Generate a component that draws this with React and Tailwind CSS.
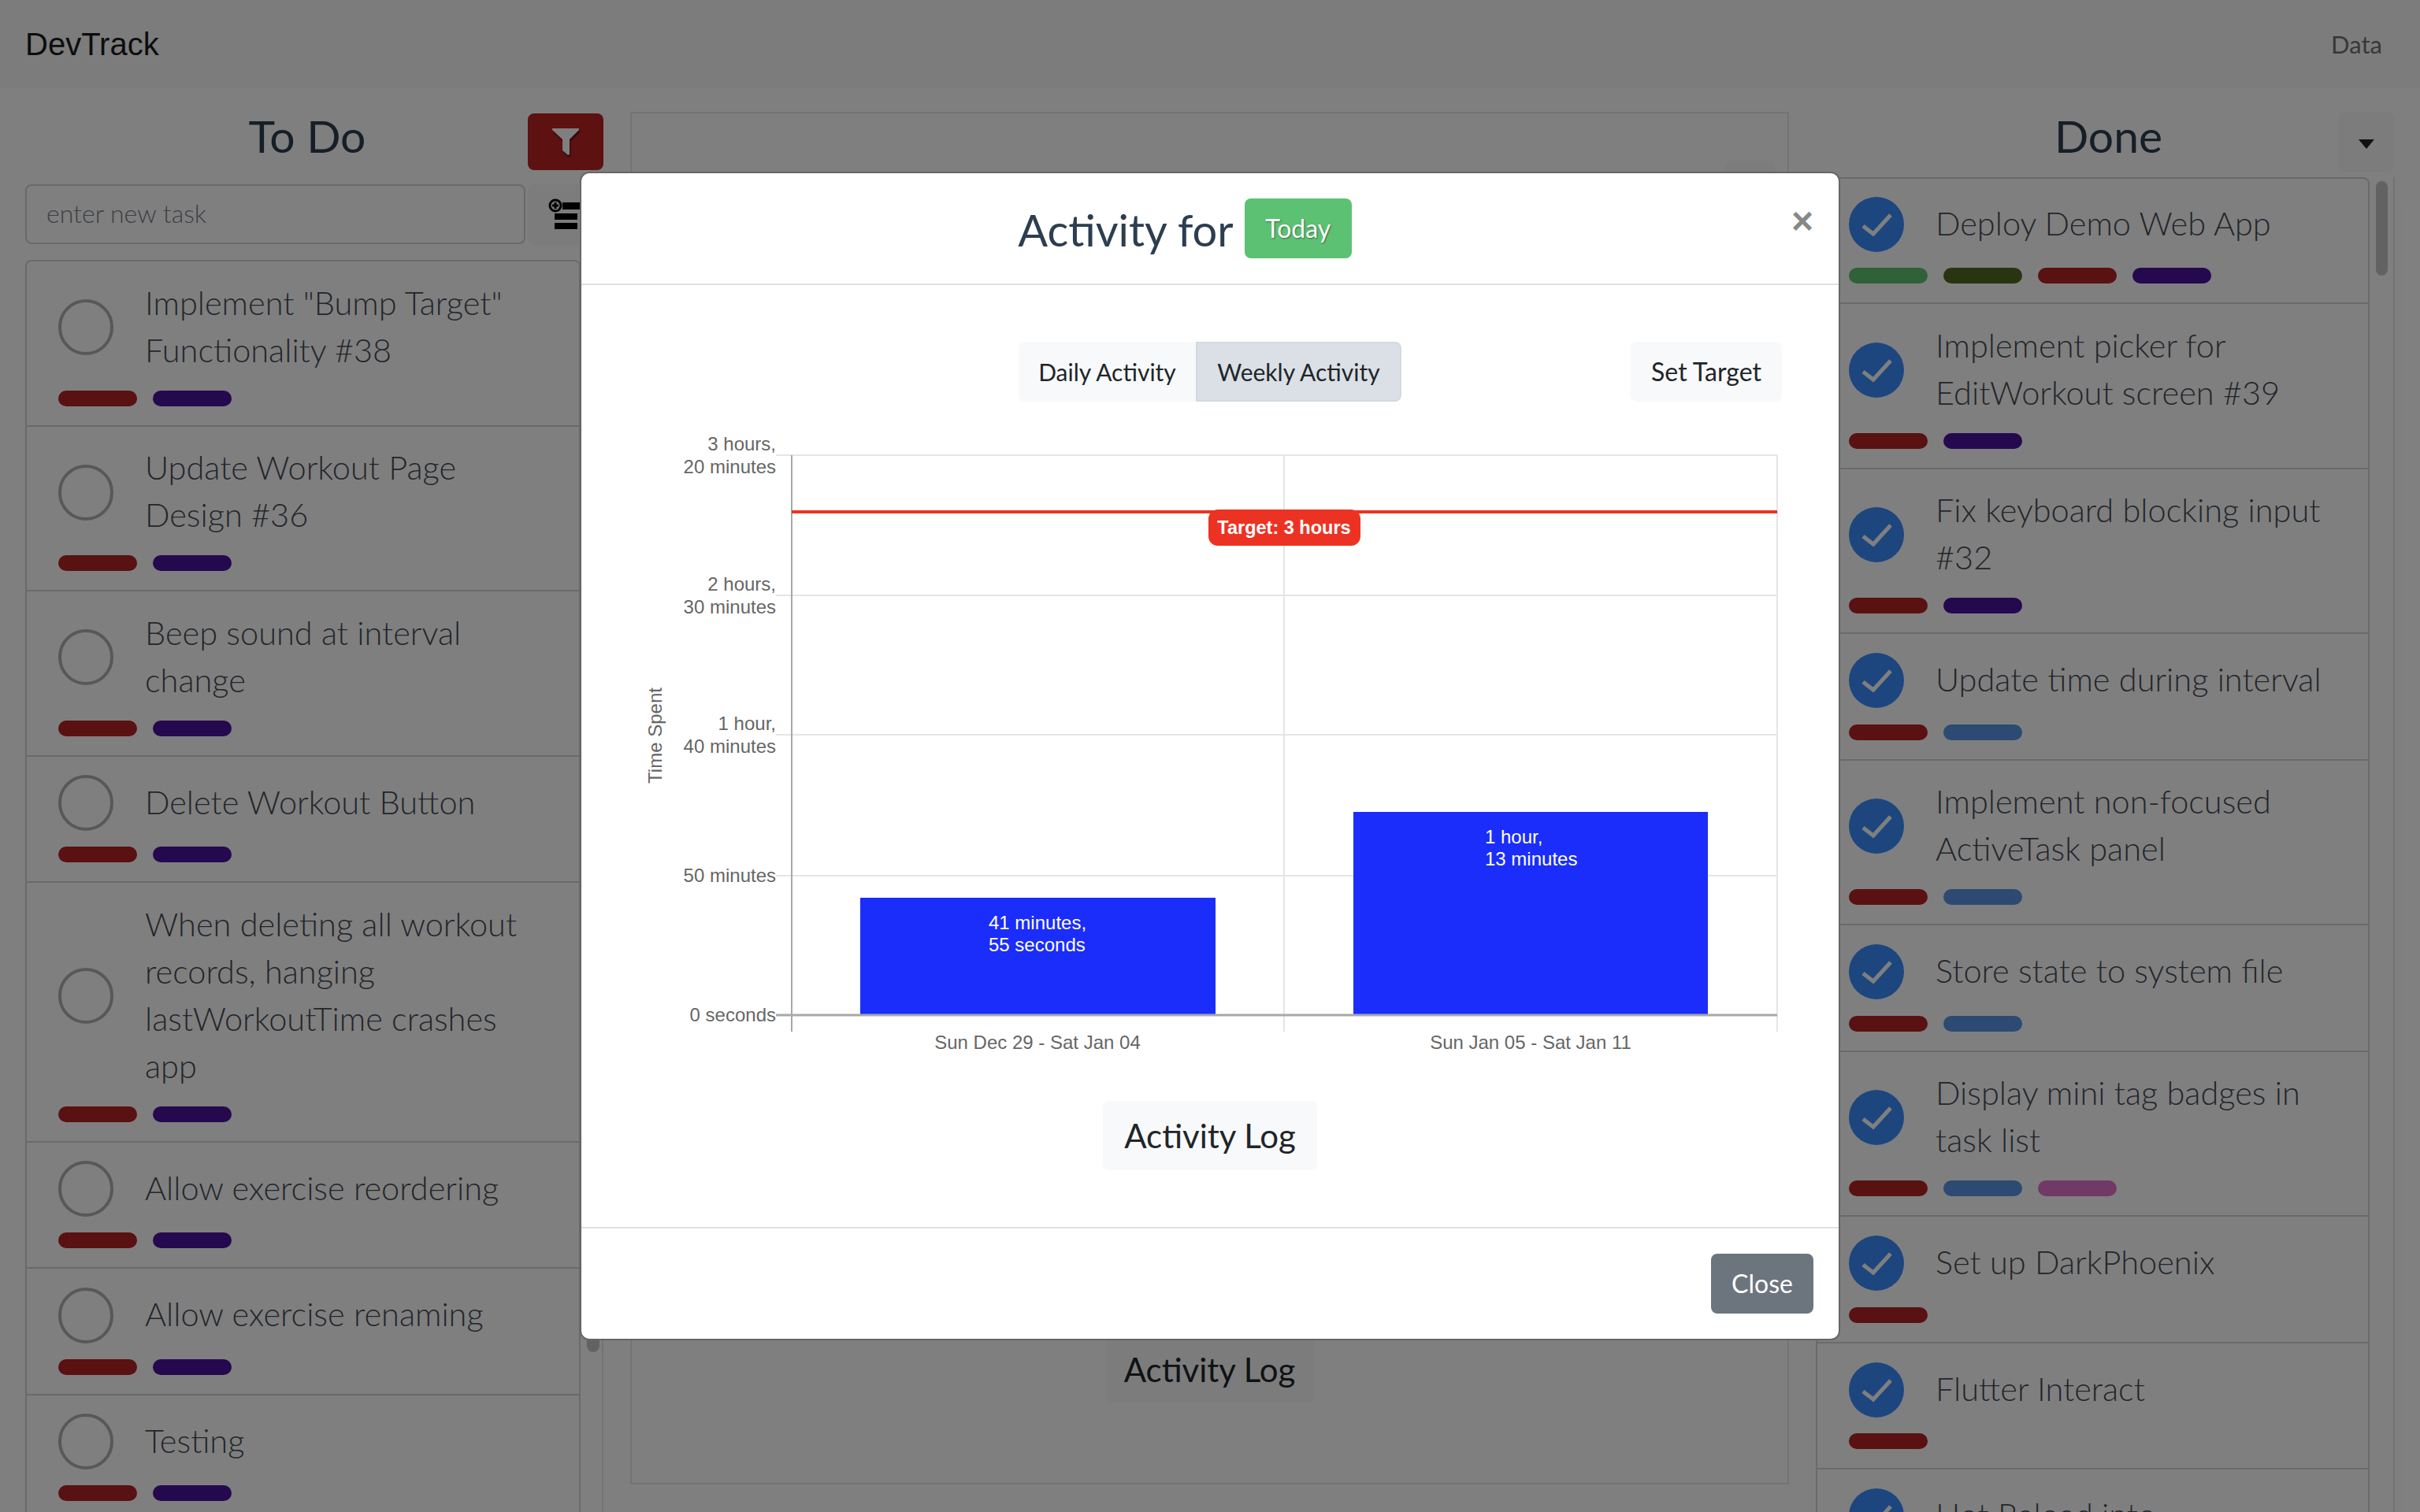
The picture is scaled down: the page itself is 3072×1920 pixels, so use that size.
import React from "react";

const RED = "bg-[#b52222]";
const PURPLE = "bg-[#4a129e]";
const BLUE = "bg-[#5894e4]";
const GREEN = "bg-[#5ec470]";
const OLIVE = "bg-[#506a20]";
const PINK = "bg-[#e274cc]";

const todoTasks = [
  { title: 'Implement "Bump Target"\nFunctionality #38', tags: [RED, PURPLE] },
  { title: "Update Workout Page\nDesign #36", tags: [RED, PURPLE] },
  { title: "Beep sound at interval\nchange", tags: [RED, PURPLE] },
  { title: "Delete Workout Button", tags: [RED, PURPLE] },
  { title: "When deleting all workout\nrecords, hanging\nlastWorkoutTime crashes\napp", tags: [RED, PURPLE] },
  { title: "Allow exercise reordering", tags: [RED, PURPLE] },
  { title: "Allow exercise renaming", tags: [RED, PURPLE] },
  { title: "Testing", tags: [RED, PURPLE] },
];

const doneTasks = [
  { title: "Deploy Demo Web App", tags: [GREEN, OLIVE, RED, PURPLE] },
  { title: "Implement picker for\nEditWorkout screen #39", tags: [RED, PURPLE] },
  { title: "Fix keyboard blocking input\n#32", tags: [RED, PURPLE] },
  { title: "Update time during interval", tags: [RED, BLUE] },
  { title: "Implement non-focused\nActiveTask panel", tags: [RED, BLUE] },
  { title: "Store state to system file", tags: [RED, BLUE] },
  { title: "Display mini tag badges in\ntask list", tags: [RED, BLUE, PINK] },
  { title: "Set up DarkPhoenix", tags: [RED] },
  { title: "Flutter Interact", tags: [RED] },
  { title: "Hot Reload into", tags: [RED] },
];

const CheckCircle = () => (
  <svg width="70" height="70" viewBox="0 0 70 70" className="shrink-0">
    <circle cx="35" cy="35" r="35" fill="#3a8cff" />
    <path d="M18 37 L31 47 L53 23" fill="none" stroke="#fff" strokeWidth="5" />
  </svg>
);

const TaskRow = ({ task, done }) => (
  <div className={`border-b-2 border-[#d4d4d4] px-[40px] pt-[23.5px] pb-[24px] ${done ? "first:pt-[22px]" : ""}`}>
    <div className="flex items-center gap-[40px] min-h-[71px]">
      {done ? (
        <CheckCircle />
      ) : (
        <div className="w-[70px] h-[71px] shrink-0 rounded-full border-[4px] border-[#b0b0b0]" />
      )}
      <div className="relative -top-[2px] text-[41.5px] leading-[60px] text-[#474c54] whitespace-pre-line font-light">{task.title}</div>
    </div>
    <div className="flex gap-[20px] mt-[20px]">
      {task.tags.map((color, i) => (
        <div key={i} className={`w-[100px] h-[20px] rounded-[10px] ${color}`} />
      ))}
    </div>
  </div>
);

const ActivityChart = () => {
  const gridY = [578, 756, 933, 1112];
  return (
    <svg width="1596" height="820" viewBox="738 530 1596 820" className="block" fontFamily="'Liberation Sans', sans-serif">
      {gridY.map((y) => (
        <line key={y} x1="985" x2="2256" y1={y} y2={y} stroke="#e5e5e5" strokeWidth="2" />
      ))}
      <line x1="1630" x2="1630" y1="578" y2="1310" stroke="#e5e5e5" strokeWidth="2" />
      <line x1="2256" x2="2256" y1="578" y2="1310" stroke="#e5e5e5" strokeWidth="2" />
      <rect x="1092" y="1140" width="451" height="149" fill="#1a2dfb" />
      <rect x="1718" y="1031" width="450" height="258" fill="#1a2dfb" />
      <line x1="1005" x2="1005" y1="578" y2="1310" stroke="#a8a8a8" strokeWidth="2" />
      <line x1="985" x2="2256" y1="1289" y2="1289" stroke="#a8a8a8" strokeWidth="3" />
      <line x1="1005" x2="2256" y1="650" y2="650" stroke="#ec3323" strokeWidth="4" />
      <rect x="1534" y="647" width="193" height="46" rx="12" fill="#ec3323" />
      <text x="1630" y="678" textAnchor="middle" fontSize="23.5" fontWeight="700" fill="#fff">Target: 3 hours</text>

      <g fontSize="24" fill="#666" textAnchor="end">
        <text x="985" y="572">3 hours,</text>
        <text x="985" y="601">20 minutes</text>
        <text x="985" y="750">2 hours,</text>
        <text x="985" y="779">30 minutes</text>
        <text x="985" y="927">1 hour,</text>
        <text x="985" y="956">40 minutes</text>
        <text x="985" y="1120">50 minutes</text>
        <text x="985" y="1297">0 seconds</text>
      </g>
      <text transform="translate(840 934) rotate(-90)" textAnchor="middle" fontSize="24" fill="#666">Time Spent</text>
      <g fontSize="24" fill="#666" textAnchor="middle">
        <text x="1317" y="1332">Sun Dec 29 - Sat Jan 04</text>
        <text x="1943" y="1332">Sun Jan 05 - Sat Jan 11</text>
      </g>
      <g fontSize="24" fill="#fff">
        <text x="1255" y="1180">41 minutes,</text>
        <text x="1255" y="1208">55 seconds</text>
        <text x="1885" y="1071">1 hour,</text>
        <text x="1885" y="1099">13 minutes</text>
      </g>
    </svg>
  );
};

const ActivityModal = () => (
  <div className="absolute left-[736px] top-[218px] w-[1600px] h-[1484px] bg-white border-2 border-[#666] rounded-[12px] flex flex-col">
    <div className="h-[142px] shrink-0 border-b-2 border-[#dee2e6] flex items-start">
      <div className="flex-1 flex justify-center items-center gap-[14px] pt-[32px]">
        <span className="relative top-[2px] text-[56px] leading-[76px] text-[#2c3e50]">Activity for</span>
        <span className="w-[136px] h-[76px] rounded-[8px] bg-[#5cc173] text-white text-[32px] flex items-center justify-center [text-shadow:1px_1px_2px_rgba(0,0,0,0.45)]">
          Today
        </span>
      </div>
      <button className="w-[64px] pr-[28px] mt-[33px] font-['Liberation_Sans'] text-[48px] leading-[56px] font-bold text-[#888]">×</button>
    </div>

    <div className="flex-1 pt-[72px]">
      <div className="grid grid-cols-[1fr_auto_1fr] px-[72px]">
        <div />
        <div className="flex h-[76px] text-[30px] text-[#212529]">
          <button className="w-[225px] bg-[#f8f9fa] rounded-l-[8px]">Daily Activity</button>
          <button className="w-[261px] bg-[#dae0e5] border-2 border-[#d3d9df] rounded-r-[8px]">Weekly Activity</button>
        </div>
        <button className="justify-self-end w-[192px] h-[76px] bg-[#f8f9fa] rounded-[8px] text-[32px] text-[#212529]">Set Target</button>
      </div>
      <div className="mt-[20px]">
        <ActivityChart />
      </div>
      <div className="flex justify-center mt-[48px]">
        <button className="w-[272px] h-[88px] bg-[#f8f9fa] rounded-[8px] text-[42px] text-[#212529]">Activity Log</button>
      </div>
    </div>

    <div className="h-[142px] shrink-0 border-t-2 border-[#dee2e6] flex justify-end pt-[32px] pr-[32px]">
      <button className="w-[130px] h-[76px] bg-[#6c757d] rounded-[8px] text-white text-[32px]">Close</button>
    </div>
  </div>
);

export default function App() {
  return (
    <div className="relative h-screen w-full overflow-hidden bg-white font-['Lato',sans-serif]">
      {/* navbar */}
      <div className="h-[112px] bg-[#f8f9fa] px-[32px] flex items-center justify-between">
        <span className="font-['Liberation_Sans'] text-[40px] text-[#1a1a1a]">DevTrack</span>
        <span className="text-[31px] text-[#707070] pr-[16px]">Data</span>
      </div>

      <div className="flex gap-[34px] px-[32px] pt-[30px]">
        {/* to do column */}
        <div className="w-[734px] shrink-0">
          <div className="flex h-[92px] items-start">
            <h2 className="flex-1 pl-[78px] text-center text-[57px] leading-[76px] text-[#2c3e50] mt-[-8px]">To Do</h2>
            <button className="w-[96px] h-[72px] mt-[2px] bg-[#bb2222] rounded-[8px] flex items-center justify-center">
              <svg width="36" height="36" viewBox="0 0 36 36" className="drop-shadow-[1px_2px_1px_rgba(0,0,0,0.6)]">
                <path d="M1 1 L35 1 L35 3 L23 15 L23 34 L21 35 L14 29 L14 15 L1 3 Z" fill="#fff" />
              </svg>
            </button>
          </div>
          <div className="flex h-[78px]">
            <input
              placeholder="enter new task"
              className="w-[635px] h-[76px] border-2 border-[#ced4da] rounded-[8px] px-[25px] pb-[4px] text-[32px] font-light placeholder:text-[#7a8088] bg-white"
            />
            <div className="flex-1 bg-[#f8f9fa] rounded-[8px] ml-[3px] relative">
              <svg width="60" height="40" viewBox="0 0 60 40" className="absolute left-[22px] top-[18px]">
                <circle cx="13" cy="9" r="7" fill="#f8f9fa" stroke="#000" strokeWidth="3" />
                <path d="M13 5 V13 M9 9 H17" stroke="#000" strokeWidth="3" />
                <rect x="22" y="5" width="40" height="9" fill="#000" />
                <rect x="12" y="19" width="29" height="8" fill="#000" />
                <rect x="12" y="31" width="29" height="8" fill="#000" />
              </svg>
            </div>
          </div>
          <div className="flex mt-[18px]">
            <div className="w-[705px] shrink-0 border-2 border-b-0 border-[#d4d4d4] rounded-t-[8px]">
              {todoTasks.map((task, i) => (
                <TaskRow key={i} task={task} />
              ))}
            </div>
            <div className="flex-1 border-r-2 border-[#e6e6e6] pl-[8px]">
              <div className="mt-[1000px] h-[387px] w-[16px] rounded-[8px] bg-[#c4c4c4]" />
            </div>
          </div>
        </div>

        {/* chart panel behind the modal */}
        <div className="flex-1 h-[1743px] border-2 border-[#e6e6e6] flex flex-col">
          <div className="flex justify-end pr-[16px] pt-[60px]">
            <div className="w-[64px] h-[76px] bg-[#f8f9fa] rounded-[8px]" />
          </div>
          <div className="flex justify-center mt-[1417px]">
            <button className="w-[266px] h-[84px] bg-[#f8f9fa] rounded-[8px] text-[42px] text-[#212529]">Activity Log</button>
          </div>
        </div>

        {/* done column */}
        <div className="w-[735px] shrink-0">
          <div className="flex h-[83px] items-start">
            <h2 className="flex-1 pl-[80px] text-center text-[57px] leading-[76px] text-[#2c3e50] mt-[-8px]">Done</h2>
            <button className="w-[72px] h-[76px] bg-[#f8f9fa] rounded-[8px] flex items-center justify-center">
              <svg width="20" height="12" viewBox="0 0 20 12" className="mt-[6px]">
                <path d="M0 0 H20 L10 12 Z" fill="#222" />
              </svg>
            </button>
          </div>
          <div className="flex">
            <div className="w-[703px] shrink-0 border-2 border-b-0 border-[#d4d4d4] rounded-t-[8px]">
              {doneTasks.map((task, i) => (
                <TaskRow key={i} task={task} done />
              ))}
            </div>
            <div className="flex-1 border-r-2 border-[#e6e6e6] pl-[8px]">
              <div className="mt-[5px] h-[120px] w-[15px] rounded-[8px] bg-[#c4c4c4]" />
            </div>
          </div>
        </div>
      </div>

      <div className="absolute inset-0 bg-black/50" />
      <ActivityModal />
    </div>
  );
}
